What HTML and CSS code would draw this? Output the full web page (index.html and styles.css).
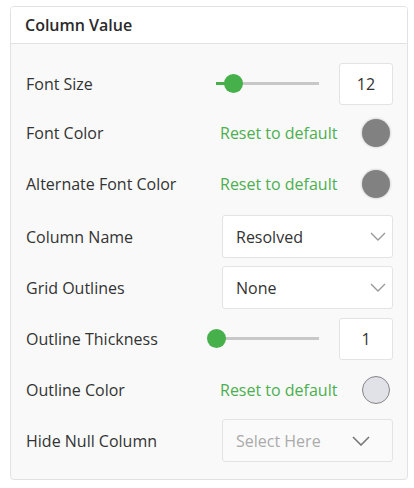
FILE: index.html
```html
<!DOCTYPE html>
<html lang="en">
<head>
  <meta charset="UTF-8">
  <title>Column Value</title>
  <link rel="stylesheet" href="styles.css">
</head>
<body>
  <div class="panel">
    <div class="panel-header">Column Value</div>
    <div class="panel-body">
      <div class="row">
        <span class="label">Font Size</span>
        <div class="control">
          <div class="slider">
            <div class="slider-fill" style="width: 17px"></div>
            <div class="slider-thumb" style="left: 17px"></div>
          </div>
          <div class="num-box">12</div>
        </div>
      </div>
      <div class="row row-short">
        <span class="label">Font Color</span>
        <div class="control color-control">
          <a class="reset">Reset to default</a>
          <span class="swatch swatch-gray"></span>
        </div>
      </div>
      <div class="row row-tall">
        <span class="label">Alternate Font Color</span>
        <div class="control color-control">
          <a class="reset">Reset to default</a>
          <span class="swatch swatch-gray"></span>
        </div>
      </div>
      <div class="row">
        <span class="label">Column Name</span>
        <div class="control">
          <div class="dropdown">
            <span>Resolved</span>
            <svg class="chevron" width="16" height="9" viewBox="0 0 16 9"><path d="M1 1l7 7 7-7" fill="none" stroke="#9a9a9a" stroke-width="1.4"/></svg>
          </div>
        </div>
      </div>
      <div class="row">
        <span class="label">Grid Outlines</span>
        <div class="control">
          <div class="dropdown">
            <span>None</span>
            <svg class="chevron" width="16" height="9" viewBox="0 0 16 9"><path d="M1 1l7 7 7-7" fill="none" stroke="#9a9a9a" stroke-width="1.4"/></svg>
          </div>
        </div>
      </div>
      <div class="row">
        <span class="label">Outline Thickness</span>
        <div class="control">
          <div class="slider">
            <div class="slider-thumb" style="left: 0px"></div>
          </div>
          <div class="num-box">1</div>
        </div>
      </div>
      <div class="row">
        <span class="label">Outline Color</span>
        <div class="control color-control">
          <a class="reset">Reset to default</a>
          <span class="swatch swatch-light"></span>
        </div>
      </div>
      <div class="row">
        <span class="label">Hide Null Column</span>
        <div class="control">
          <div class="dropdown dropdown-empty">
            <span>Select Here</span>
            <svg class="chevron" width="18" height="10" viewBox="0 0 18 10"><path d="M1 1l8 8 8-8" fill="none" stroke="#777" stroke-width="1.6"/></svg>
          </div>
        </div>
      </div>
    </div>
  </div>
</body>
</html>
```

FILE: styles.css
```css
body {
  margin: 0;
  background-color: #ffffff;
  font-family: 'Open Sans', 'Noto Sans', sans-serif;
  color: #333333;
}
.panel {
  margin: 6px 0 0 10px;
  width: 398px;
  height: 474px;
  box-sizing: border-box;
  border: 1px solid #e2e2e2;
  border-radius: 4px;
  background-color: #f9f9f9;
  overflow: hidden;
}
.panel-header {
  height: 37px;
  box-sizing: border-box;
  padding: 0 14px;
  display: flex;
  align-items: center;
  background-color: #ffffff;
  border-bottom: 1px solid #e2e2e2;
  font-size: 16px;
  font-weight: 600;
  color: #2a2a2a;
}
.panel-body {
  padding: 14px 14px 0 15px;
}
.row {
  height: 51px;
  display: flex;
  align-items: center;
}
.row-short {
  height: 47px;
}
.row-tall {
  height: 55px;
}
.label {
  flex: 1;
  font-size: 16px;
  color: #333333;
}
.control {
  width: 177px;
  display: flex;
  align-items: center;
  justify-content: space-between;
}

/* slider */
.slider {
  position: relative;
  width: 103px;
  height: 3px;
  background-color: #c8c8c8;
}
.slider-fill {
  height: 3px;
  background-color: #46b04a;
}
.slider-thumb {
  position: absolute;
  top: -8px;
  width: 19px;
  height: 19px;
  margin-left: -9px;
  border-radius: 50%;
  background-color: #46b04a;
}
.num-box {
  width: 54px;
  height: 42px;
  box-sizing: border-box;
  border: 1px solid #e3e3e3;
  border-radius: 3px;
  background-color: #ffffff;
  display: flex;
  align-items: center;
  justify-content: center;
  font-size: 16px;
  color: #333333;
}

/* colour rows */
.color-control {
  padding: 0 3px 0 4px;
  box-sizing: border-box;
}
.reset {
  color: #4caf50;
  font-size: 16px;
  cursor: pointer;
}
.swatch {
  width: 28px;
  height: 28px;
  box-sizing: border-box;
  border-radius: 50%;
}
.swatch-gray {
  background-color: #818181;
  box-shadow: 0 0 2px 1px rgba(0, 0, 0, 0.12);
}
.swatch-light {
  background-color: #e1e1e8;
  border: 1.5px solid #858585;
}

/* dropdowns */
.dropdown {
  margin-left: 6px;
  width: 171px;
  height: 43px;
  box-sizing: border-box;
  border: 1px solid #e3e3e3;
  border-radius: 3px;
  background-color: #ffffff;
  display: flex;
  align-items: center;
  justify-content: space-between;
  padding: 0 6px 0 13px;
  font-size: 16px;
  color: #333333;
}
.dropdown-empty {
  color: #aaaaaa;
  justify-content: flex-start;
  background-color: #fafafa;
}
.dropdown-empty .chevron {
  margin-left: 31px;
}
```
